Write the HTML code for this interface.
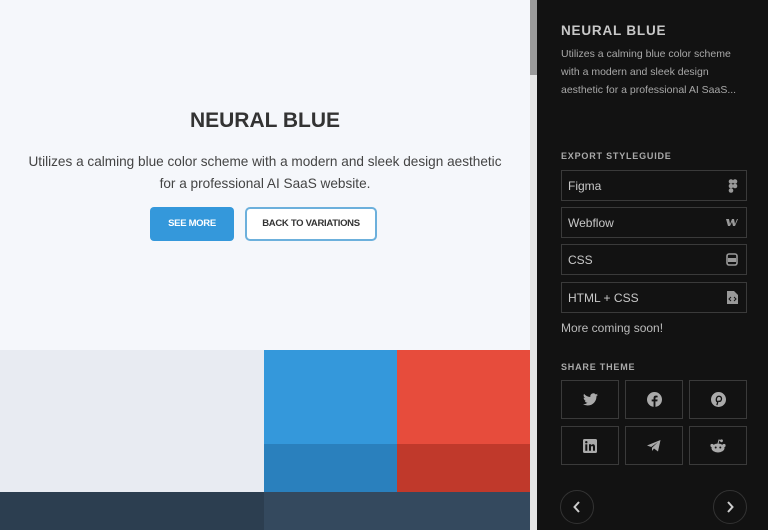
<!DOCTYPE html><html><head><style>
*{margin:0;padding:0;box-sizing:border-box}
body{width:768px;height:530px;overflow:hidden;font-family:"Liberation Sans",sans-serif;background:#f5f7fb;position:relative}
.a{position:absolute}
.side{left:537px;top:0;width:231px;height:530px;background:#121212;color:#bbb}
.box{position:absolute;left:24px;width:186px;height:31px;border:1px solid #3a3a3a;color:#c8c8c8;font-size:12px;padding:8px 0 0 6px}
.box svg{position:absolute;right:8px;top:8px}
.sh{position:absolute;width:58px;height:39px;border:1px solid #3a3a3a;display:flex;align-items:center;justify-content:center}
.lbl{position:absolute;left:24px;font-size:9px;font-weight:bold;letter-spacing:.8px;color:#aaa}
.circ{position:absolute;width:34px;height:34px;border:1px solid #333;border-radius:50%;display:flex;align-items:center;justify-content:center;top:490px}
</style></head><body>
<div class="a" style="left:0;top:109px;width:530px;text-align:center;font-size:21px;font-weight:bold;color:#333">NEURAL BLUE</div>
<div class="a" style="left:0;top:151px;width:530px;text-align:center;font-size:13.6px;line-height:22px;color:#444">Utilizes a calming blue color scheme with a modern and sleek design aesthetic<br>for a professional AI SaaS website.</div>
<div class="a" style="left:150px;top:207px;width:84px;height:34px;background:#3498db;border-radius:4px;color:#fff;font-size:9.5px;font-weight:bold;text-align:center;line-height:34px;letter-spacing:-.3px">SEE MORE</div>
<div class="a" style="left:245px;top:207px;width:132px;height:34px;border:2px solid #6cb0dc;border-radius:5px;color:#333;font-size:9.5px;font-weight:bold;text-align:center;line-height:30px;letter-spacing:-.3px;background:#fff">BACK TO VARIATIONS</div>
<div class="a" style="left:0;top:350px;width:264px;height:142px;background:#e8ebf2"></div>
<div class="a" style="left:264px;top:350px;width:133px;height:94px;background:#3498db"></div>
<div class="a" style="left:264px;top:444px;width:133px;height:48px;background:#2a80bd"></div>
<div class="a" style="left:397px;top:350px;width:133px;height:94px;background:#e74c3c"></div>
<div class="a" style="left:397px;top:444px;width:133px;height:48px;background:#c0392b"></div>
<div class="a" style="left:0;top:492px;width:264px;height:38px;background:#2c3e50"></div>
<div class="a" style="left:264px;top:492px;width:266px;height:38px;background:#34495e"></div>
<div class="a" style="left:530px;top:0;width:7px;height:530px;background:#e6e6e6"></div>
<div class="a" style="left:530px;top:0;width:7px;height:75px;background:#9a9a9a"></div>
<div class="a side">
<div class="a" style="left:24px;top:23px;font-size:13.5px;font-weight:bold;letter-spacing:.8px;color:#c8c8c8">NEURAL BLUE</div>
<div class="a" style="left:24px;top:45px;width:178px;font-size:10.5px;line-height:18px;color:#a8a8a8">Utilizes a calming blue color scheme with a modern and sleek design aesthetic for a professional AI SaaS...</div>
<div class="lbl" style="top:151px">EXPORT STYLEGUIDE</div>
<div class="box" style="top:170px">Figma<svg width="10" height="14" viewBox="0 0 10 14"><g fill="#999"><circle cx="3" cy="2.5" r="2.3"/><circle cx="3" cy="7" r="2.3"/><circle cx="3" cy="11.5" r="2.3"/><circle cx="7" cy="2.5" r="2.3"/><circle cx="7" cy="7" r="2.3"/></g></svg></div>
<div class="box" style="top:207px">Webflow<svg width="12" height="12" viewBox="0 0 12 12"><path d="M0 3h3l1 5 2-5h2l1 5 2-5h1l-3 7H7L6 6 4 10H2z" fill="#999"/></svg></div>
<div class="box" style="top:244px">CSS<svg width="12" height="13" viewBox="0 0 12 13"><rect x="1" y="1" width="10" height="11" rx="2" fill="none" stroke="#999" stroke-width="1.6"/><rect x="2" y="5" width="8" height="4" fill="#999"/></svg></div>
<div class="box" style="top:282px">HTML + CSS<svg width="11" height="13" viewBox="0 0 11 13"><path d="M0 0h7l4 4v9H0z" fill="#999"/><path d="M4 6l-2 2 2 2M7 6l2 2-2 2" stroke="#121212" fill="none"/></svg></div>
<div class="a" style="left:24px;top:321px;font-size:12px;color:#bbb">More coming soon!</div>
<div class="lbl" style="top:362px">SHARE THEME</div>
<div class="sh" style="left:24px;top:380px"><svg width="15" height="13" viewBox="0 0 24 20"><path d="M24 2.4a10 10 0 0 1-2.8.8A5 5 0 0 0 23.3.5a10 10 0 0 1-3.1 1.2A4.9 4.9 0 0 0 11.8 6 14 14 0 0 1 1.7.9a4.9 4.9 0 0 0 1.5 6.6A4.9 4.9 0 0 1 1 6.9a4.9 4.9 0 0 0 3.9 4.8 5 5 0 0 1-2.2.1 4.9 4.9 0 0 0 4.6 3.4A9.9 9.9 0 0 1 0 17.3 14 14 0 0 0 7.5 19.5c9 0 14-7.5 14-14v-.6A10 10 0 0 0 24 2.4z" fill="#aaa"/></svg></div>
<div class="sh" style="left:88px;top:380px"><svg width="15" height="15" viewBox="0 0 16 16"><circle cx="8" cy="8" r="8" fill="#aaa"/><path d="M9 16v-6h2l.3-2H9V6.7c0-.6.2-1 1-1h1.3V4c-.3 0-1-.1-1.8-.1C7.8 3.9 7 4.9 7 6.5V8H5v2h2v6z" fill="#121212"/></svg></div>
<div class="sh" style="left:152px;top:380px"><svg width="15" height="15" viewBox="0 0 16 16"><circle cx="8" cy="8" r="8" fill="#aaa"/><path d="M7.5 9.5 6.3 14M6.5 10.5C5 9 5.5 4.5 8.5 4.5c2.5 0 3 2.2 2.5 3.8-.6 2-2.5 2-3 1" stroke="#121212" stroke-width="1.4" fill="none"/></svg></div>
<div class="sh" style="left:24px;top:426px"><svg width="14" height="14" viewBox="0 0 14 14"><rect width="14" height="14" rx="1.5" fill="#aaa"/><rect x="2.3" y="5.3" width="2" height="6.5" fill="#121212"/><circle cx="3.3" cy="3.2" r="1.2" fill="#121212"/><path d="M6 5.3h2v1c.4-.7 1.2-1.1 2-1.1 1.5 0 2 1 2 2.6v4H10V8.3c0-.8-.2-1.3-.9-1.3S8 7.6 8 8.3v3.5H6z" fill="#121212"/></svg></div>
<div class="sh" style="left:88px;top:426px"><svg width="14" height="12" viewBox="0 0 14 12"><path d="M0 5.5 13.5 0 11 11.5 7 8.5 5 11V7.8L11 2 4.2 7z" fill="#aaa"/></svg></div>
<div class="sh" style="left:152px;top:426px"><svg width="16" height="14" viewBox="0 0 16 14"><ellipse cx="8" cy="9" rx="6.5" ry="4.5" fill="#aaa"/><circle cx="2" cy="6.5" r="1.6" fill="#aaa"/><circle cx="14" cy="6.5" r="1.6" fill="#aaa"/><circle cx="11.5" cy="1.8" r="1.4" fill="#aaa"/><path d="M8 4.5 9 1l2.5.8" stroke="#aaa" fill="none"/><circle cx="5.7" cy="8.5" r="1" fill="#121212"/><circle cx="10.3" cy="8.5" r="1" fill="#121212"/></svg></div>
<div class="circ" style="left:23px"><svg width="8" height="12" viewBox="0 0 8 12"><path d="M6 1 1.5 6 6 11" stroke="#ccc" stroke-width="2" fill="none"/></svg></div>
<div class="circ" style="left:176px"><svg width="8" height="12" viewBox="0 0 8 12"><path d="M2 1l4.5 5L2 11" stroke="#ccc" stroke-width="2" fill="none"/></svg></div>
</div>
</body></html>
